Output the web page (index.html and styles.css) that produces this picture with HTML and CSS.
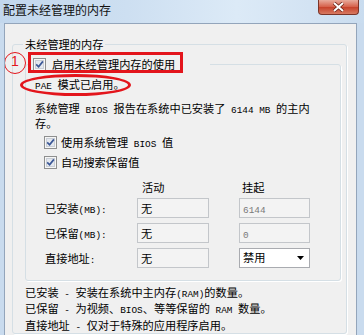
FILE: index.html
```html
<!DOCTYPE html>
<html lang="zh-CN">
<head>
  <meta charset="utf-8">
  <meta name="viewport" content="width=device-width, initial-scale=1.0">
  <title>配置未经管理的内存</title>
  <link rel="stylesheet" href="styles.css">
</head>
<body>

  <div class="titlebar">
    <span class="title">配置未经管理的内存</span>
    <span class="close">
      <svg width="13" height="10" viewBox="0 0 13 10">
        <path d="M2 1 L11 9 M11 1 L2 9" stroke="#6b2418" stroke-width="3.6" fill="none"/>
        <path d="M2 1 L11 9 M11 1 L2 9" stroke="#fff" stroke-width="2" fill="none"/>
      </svg>
    </span>
  </div>

  <div class="frame">
    <div class="client">

      <!-- Unmanaged memory group -->
      <fieldset class="group outer">
        <legend>未经管理的内存</legend>

        <fieldset class="group inner">
          <legend class="check-legend">
            <span class="mark-box">
              <svg class="cb" width="13" height="13" viewBox="0 0 13 13">
                <rect x="0.5" y="0.5" width="12" height="12" fill="#f6f6f6" stroke="#8e8f8f"/>
                <rect x="2.5" y="2.5" width="8" height="8" fill="#e4e8ee" stroke="#c9ced6"/>
                <path d="M3.2 6.4 L5.6 8.8 L9.9 3.4" fill="none" stroke="#3b5796" stroke-width="1.7"/>
              </svg>
              启用未经管理内存的使用
            </span>
          </legend>

          <p class="pae"><span class="mark-oval"><span class="en">PAE </span>模式已启用。</span></p>

          <p class="report">系统管理<span class="en"> BIOS </span>报告在系统中已安装了<span class="en"> 6144 MB </span>的主内存。</p>

          <div class="check-row first">
            <svg class="cb" width="13" height="13" viewBox="0 0 13 13">
              <rect x="0.5" y="0.5" width="12" height="12" fill="#f6f6f6" stroke="#8e8f8f"/>
              <rect x="2.5" y="2.5" width="8" height="8" fill="#e4e8ee" stroke="#c9ced6"/>
              <path d="M3.2 6.4 L5.6 8.8 L9.9 3.4" fill="none" stroke="#3b5796" stroke-width="1.7"/>
            </svg>
            <span>使用系统管理<span class="en"> BIOS </span>值</span>
          </div>
          <div class="check-row">
            <svg class="cb" width="13" height="13" viewBox="0 0 13 13">
              <rect x="0.5" y="0.5" width="12" height="12" fill="#f6f6f6" stroke="#8e8f8f"/>
              <rect x="2.5" y="2.5" width="8" height="8" fill="#e4e8ee" stroke="#c9ced6"/>
              <path d="M3.2 6.4 L5.6 8.8 L9.9 3.4" fill="none" stroke="#3b5796" stroke-width="1.7"/>
            </svg>
            <span>自动搜索保留值</span>
          </div>

          <div class="mem-grid">
            <span></span>
            <span class="col-head active">活动</span>
            <span class="col-head pending">挂起</span>

            <span class="row-label">已安装<span class="en">(MB):</span></span>
            <span class="field">无</span>
            <span class="field dim"><span class="en">6144</span></span>

            <span class="row-label">已保留<span class="en">(MB):</span></span>
            <span class="field">无</span>
            <span class="field dim"><span class="en">0</span></span>

            <span class="row-label">直接地址<span class="en">:</span></span>
            <span class="field">无</span>
            <span class="select">禁用
              <svg width="7" height="4" viewBox="0 0 7 4"><path d="M0 0 H7 L3.5 4 Z" fill="#000"/></svg>
            </span>
          </div>
        </fieldset>

        <p class="note first">已安装<span class="en"> - </span>安装在系统中主内存<span class="en">(RAM)</span>的数量。</p>
        <p class="note">已保留<span class="en"> - </span>为视频、<span class="en">BIOS</span>、等等保留的<span class="en"> RAM </span>数量。</p>
        <p class="note">直接地址<span class="en"> - </span>仅对于特殊的应用程序启用。</p>
      </fieldset>

    </div>
  </div>

</body>
</html>
```

FILE: styles.css
```css
* { box-sizing: border-box; }
body { margin: 0; width: 364px; height: 335px; overflow: hidden; font-family: "Noto Sans CJK SC", sans-serif; font-size: 11.2px; line-height: 15px; color: #000; background: #c9dbee; }
.en { font-family: "Liberation Mono", monospace; font-size: 9.4px; line-height: 1; }

/* title bar */
.titlebar { display: flex; justify-content: space-between; align-items: flex-start; height: 23px; background: linear-gradient(90deg, #c2d7ed 0%, #cddff1 35%, #dceaf7 65%, #d3e3f3 85%, #c9dcef 100%); }
.title { padding-left: 3px; font-size: 12px; line-height: 20px; color: #111; }
.close { display: flex; align-items: center; justify-content: center; width: 41px; height: 15px; margin-right: 5px; border: 1px solid #7b3428; border-top: none; border-radius: 0 0 4px 4px; background: linear-gradient(#e8ab9c, #d6614b 48%, #c7422b 52%, #d77a62); }

/* window frame + client */
.frame { height: 312px; padding: 0 7px 0 4px; }
.client { height: 100%; padding: 0 9px 0 7px; background: #f0f0f0; border: 1px solid #93a5bb; border-bottom: none; overflow: hidden; }

/* group boxes */
.group { margin: 0; min-inline-size: 0; border: 1px solid #d5dfe5; border-radius: 3px; box-shadow: 1px 1px 0 #fff; }
.outer { margin-top: 13px; padding: 4px 5px 0 12px; }
.outer > legend { margin-left: -2px; padding: 0 2px; line-height: 15px; }
.inner { padding: 3px 8px 12px 9px; }
.check-legend { width: 179px; margin-left: -4px; padding: 0 0 0 2px; line-height: 16px; }
.cb { flex: none; display: block; }

/* red annotations */
.mark-box { position: relative; display: inline-flex; align-items: center; gap: 6px; }
.mark-box::after { content: ""; position: absolute; left: -5px; right: -8px; top: -4px; bottom: -1px; border: 3px solid #e3151c; }
.mark-box::before { content: "1"; position: absolute; left: -29px; top: -4px; width: 20px; height: 20px; border: 1.5px solid #e3151c; border-radius: 50%; color: #e3151c; font-family: "Liberation Sans", sans-serif; font-size: 14px; line-height: 17px; text-align: center; }
.mark-oval { position: relative; display: inline-block; }
.mark-oval::after { content: ""; position: absolute; left: -15px; right: -6px; top: -3px; bottom: -4px; border: 3px solid #e3151c; border-radius: 50%; }

/* body text */
.pae { margin: 0; }
.report { margin: 9px 0 0; max-width: 284px; }
.check-row { display: flex; align-items: center; gap: 4px; height: 20px; margin-left: 9px; }
.check-row.first { margin-top: 2px; }

/* memory table */
.mem-grid { display: grid; grid-template-columns: 92px 102px 71px; grid-template-rows: 12px 20px 20px 20px; row-gap: 5px; align-items: center; margin: 8px 0 0 10px; }
.col-head { line-height: 12px; }
.col-head.active { padding-left: 5px; }
.col-head.pending { padding-left: 3px; }
.row-label { line-height: 20px; }
.field { width: 72px; height: 20px; padding-left: 3px; line-height: 18px; background: #f3f3f3; border: 1px solid #c3c6ca; }
.field.dim { width: 71px; color: #7a7a7a; }
.select { display: flex; justify-content: space-between; align-items: center; width: 71px; height: 20px; padding: 0 5px 0 3px; background: #fff; border: 1px solid #a9abb0; }

.note { margin: 0; line-height: 16.5px; }
.note.first { margin-top: 3px; }
```
